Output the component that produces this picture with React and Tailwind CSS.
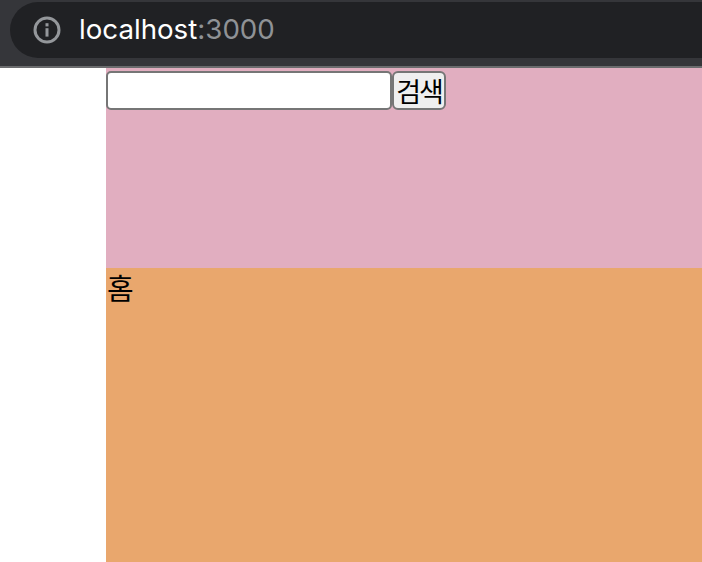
import React from "react";

const sans = '"Noto Sans CJK KR", "Liberation Sans", sans-serif';

export default function App() {
  return (
    <div className="w-[702px] h-[562px] overflow-hidden bg-white flex flex-col">
      <header className="h-[68px] shrink-0 bg-[#35363a] border-b-2 border-[#6b6c6e] pt-[2px] pl-[10px]">
        <div className="h-[56px] rounded-l-[28px] bg-[#202124] flex items-center pl-[23px]">
          <svg width="28" height="28" viewBox="0 0 28 28" fill="none" className="shrink-0">
            <circle cx="14" cy="14" r="12" stroke="#94979b" strokeWidth="3" />
            <rect x="12.5" y="7.2" width="3" height="3.2" fill="#94979b" />
            <rect x="12.5" y="12.2" width="3" height="8.4" fill="#94979b" />
          </svg>
          <div className="ml-[18px] text-[27.7px] leading-none whitespace-nowrap" style={{ fontFamily: "Inter, sans-serif" }}>
            <span className="text-white">localhost</span>
            <span className="text-[#8f9296]">:3000</span>
          </div>
        </div>
      </header>
      <main className="ml-[106px] flex-1 flex flex-col">
        <section className="h-[200px] shrink-0 bg-[#e1aec0] pt-[3px] flex items-start">
          <input className="w-[286px] h-[39px] bg-white border-2 border-[#767676] rounded-[5px]" />
          <button
            className="w-[54px] h-[39px] bg-[#efefef] border-2 border-[#767676] rounded-[6px] text-[27px] tracking-[-2px] leading-none text-black flex items-center justify-center whitespace-nowrap"
            style={{ fontFamily: sans }}
          >
            검색
          </button>
        </section>
        <section className="flex-1 bg-[#e9a76d] text-[29px] leading-[38px] pl-[1px] text-black" style={{ fontFamily: sans }}>
          홈
        </section>
      </main>
    </div>
  );
}
